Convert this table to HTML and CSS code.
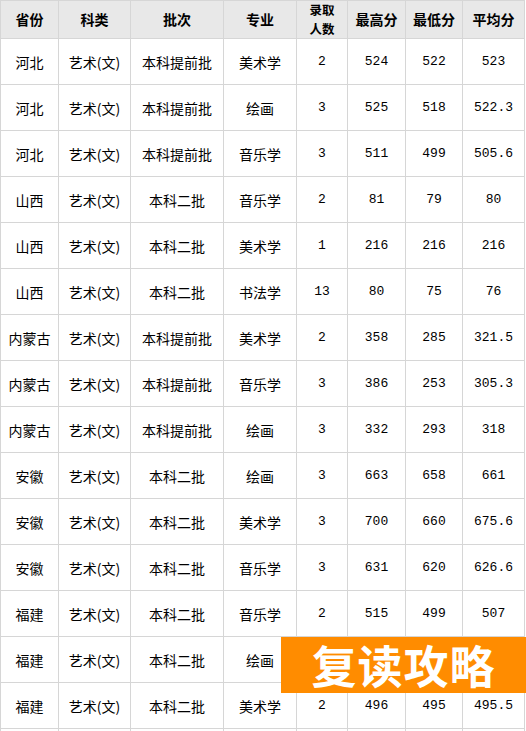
FILE: index.html
```html
<!DOCTYPE html>
<html lang="zh-CN">
<head>
<meta charset="utf-8">
<link rel="stylesheet" href="styles.css">
</head>
<body>
<div class="page">
<table class="scores">
<colgroup>
<col class="c1"><col class="c2"><col class="c3"><col class="c4"><col class="c5"><col class="c6"><col class="c7"><col class="c8">
</colgroup>
<thead>
<tr><th>省份</th><th>科类</th><th>批次</th><th>专业</th><th class="two">录取<br>人数</th><th>最高分</th><th>最低分</th><th>平均分</th></tr>
</thead>
<tbody>
<tr><td>河北</td><td>艺术(文)</td><td>本科提前批</td><td>美术学</td><td class="n">2</td><td class="n">524</td><td class="n">522</td><td class="n">523</td></tr>
<tr><td>河北</td><td>艺术(文)</td><td>本科提前批</td><td>绘画</td><td class="n">3</td><td class="n">525</td><td class="n">518</td><td class="n">522.3</td></tr>
<tr><td>河北</td><td>艺术(文)</td><td>本科提前批</td><td>音乐学</td><td class="n">3</td><td class="n">511</td><td class="n">499</td><td class="n">505.6</td></tr>
<tr><td>山西</td><td>艺术(文)</td><td>本科二批</td><td>音乐学</td><td class="n">2</td><td class="n">81</td><td class="n">79</td><td class="n">80</td></tr>
<tr><td>山西</td><td>艺术(文)</td><td>本科二批</td><td>美术学</td><td class="n">1</td><td class="n">216</td><td class="n">216</td><td class="n">216</td></tr>
<tr><td>山西</td><td>艺术(文)</td><td>本科二批</td><td>书法学</td><td class="n">13</td><td class="n">80</td><td class="n">75</td><td class="n">76</td></tr>
<tr><td>内蒙古</td><td>艺术(文)</td><td>本科提前批</td><td>美术学</td><td class="n">2</td><td class="n">358</td><td class="n">285</td><td class="n">321.5</td></tr>
<tr><td>内蒙古</td><td>艺术(文)</td><td>本科提前批</td><td>音乐学</td><td class="n">3</td><td class="n">386</td><td class="n">253</td><td class="n">305.3</td></tr>
<tr><td>内蒙古</td><td>艺术(文)</td><td>本科提前批</td><td>绘画</td><td class="n">3</td><td class="n">332</td><td class="n">293</td><td class="n">318</td></tr>
<tr><td>安徽</td><td>艺术(文)</td><td>本科二批</td><td>绘画</td><td class="n">3</td><td class="n">663</td><td class="n">658</td><td class="n">661</td></tr>
<tr><td>安徽</td><td>艺术(文)</td><td>本科二批</td><td>美术学</td><td class="n">3</td><td class="n">700</td><td class="n">660</td><td class="n">675.6</td></tr>
<tr><td>安徽</td><td>艺术(文)</td><td>本科二批</td><td>音乐学</td><td class="n">3</td><td class="n">631</td><td class="n">620</td><td class="n">626.6</td></tr>
<tr><td>福建</td><td>艺术(文)</td><td>本科二批</td><td>音乐学</td><td class="n">2</td><td class="n">515</td><td class="n">499</td><td class="n">507</td></tr>
<tr><td>福建</td><td>艺术(文)</td><td>本科二批</td><td>绘画</td><td class="n"></td><td class="n"></td><td class="n"></td><td class="n"></td></tr>
<tr><td>福建</td><td>艺术(文)</td><td>本科二批</td><td>美术学</td><td class="n">2</td><td class="n">496</td><td class="n">495</td><td class="n">495.5</td></tr>
<tr class="tail"><td></td><td></td><td></td><td></td><td></td><td></td><td></td><td></td></tr>
</tbody>
</table>
<div class="stamp">复读攻略</div>
</div>
</body>
</html>
```

FILE: styles.css
```css
html, body {
  margin: 0;
  padding: 0;
  background: #ffffff;
}
body {
  font-family: "Noto Sans CJK SC", "Noto Sans", sans-serif;
  color: #000;
  overflow: hidden;
}
.page {
  position: relative;
  width: 526px;
  height: 731px;
  overflow: hidden;
}
.scores {
  border-collapse: collapse;
  table-layout: fixed;
  width: 524px;
  font-size: 14px;
}
.c1 { width: 58px; }
.c2 { width: 72px; }
.c3 { width: 93px; }
.c4 { width: 73px; }
.c5 { width: 51px; }
.c6 { width: 58px; }
.c7 { width: 57px; }
.c8 { width: 62px; }
.scores th,
.scores td {
  border: 1px solid #d6d6d6;
  text-align: center;
  padding: 0;
  white-space: nowrap;
}
.scores th {
  background: #e8e8e8;
  height: 37px;
  font-weight: 700;
  line-height: 17px;
  font-size: 14px;
}
.scores th.two {
  font-size: 12.5px;
  line-height: 18.5px;
}
.scores td {
  height: 45px;
  line-height: 16px;
}
.scores td.n {
  font-family: "Liberation Mono", "DejaVu Sans Mono", monospace;
  font-size: 13px;
}
.stamp {
  position: absolute;
  left: 281px;
  top: 637px;
  width: 245px;
  height: 56px;
  background: #ff8c00;
  color: #ffffff;
  font-family: "Noto Sans CJK SC", sans-serif;
  font-weight: 700;
  font-size: 45px;
  line-height: 56px;
  text-align: center;
  letter-spacing: 1px;
}
```
